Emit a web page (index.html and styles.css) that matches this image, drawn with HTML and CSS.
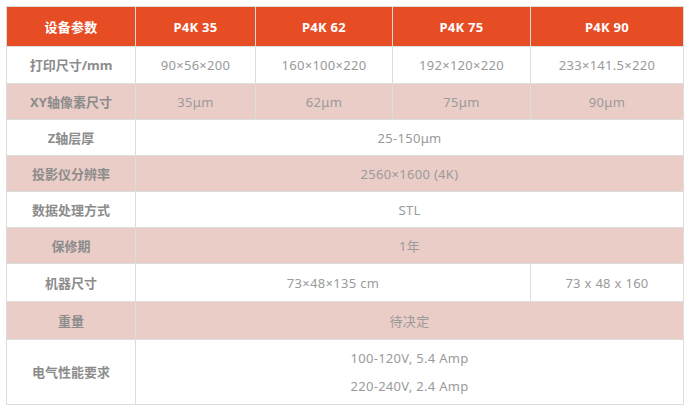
FILE: index.html
```html
<!DOCTYPE html>
<html lang="zh-CN">
<head>
<meta charset="utf-8">
<title>设备参数</title>
<link rel="stylesheet" href="styles.css">
</head>
<body>
<table class="spec">
  <colgroup>
    <col class="c1"><col class="c2"><col class="c3"><col class="c4"><col class="c5">
  </colgroup>
  <thead>
    <tr class="head">
      <th>设备参数</th><th>P4K 35</th><th>P4K 62</th><th>P4K 75</th><th>P4K 90</th>
    </tr>
  </thead>
  <tbody>
    <tr class="r37">
      <th>打印尺寸/mm</th><td>90×56×200</td><td>160×100×220</td><td>192×120×220</td><td>233×141.5×220</td>
    </tr>
    <tr class="alt">
      <th>XY轴像素尺寸</th><td>35μm</td><td>62μm</td><td>75μm</td><td>90μm</td>
    </tr>
    <tr>
      <th>Z轴层厚</th><td colspan="4">25-150μm</td>
    </tr>
    <tr class="alt">
      <th>投影仪分辨率</th><td colspan="4">2560×1600 (4K)</td>
    </tr>
    <tr>
      <th>数据处理方式</th><td colspan="4">STL</td>
    </tr>
    <tr class="alt">
      <th>保修期</th><td colspan="4">1年</td>
    </tr>
    <tr class="r38">
      <th>机器尺寸</th><td colspan="3">73×48×135 cm</td><td>73 x 48 x 160</td>
    </tr>
    <tr class="alt r38">
      <th>重量</th><td colspan="4">待决定</td>
    </tr>
    <tr class="tall">
      <th>电气性能要求</th><td colspan="4"><p class="line">100-120V, 5.4 Amp</p><p class="line">220-240V, 2.4 Amp</p></td>
    </tr>
  </tbody>
</table>
</body>
</html>
```

FILE: styles.css
```css
html, body {
  margin: 0;
  padding: 0;
  background: #ffffff;
}
body {
  padding: 6px;
  font-family: "Noto Sans", "Noto Sans CJK SC", sans-serif;
  font-size: 13px;
  color: #9a9a9a;
}
.spec {
  border-collapse: collapse;
  table-layout: fixed;
  width: 677px;
}
.c1 { width: 129px; }
.c2 { width: 120px; }
.c3 { width: 137px; }
.c4 { width: 138px; }
.c5 { width: 153px; }
.spec th,
.spec td {
  border: 1px solid #dddddd;
  text-align: center;
  vertical-align: middle;
  padding: 0;
  height: 35px;
  line-height: 18px;
}
.spec td {
  letter-spacing: 0.3px;
}
.spec tbody th {
  font-weight: bold;
  color: #8c8c8c;
}
.head th {
  background: #e64d25;
  color: #ffffff;
  font-weight: bold;
  height: 39px;
  letter-spacing: 0.3px;
}
.r37 th,
.r37 td {
  height: 36px;
}
.r38 th,
.r38 td {
  height: 37px;
}
.alt th,
.alt td {
  background: #eacdc7;
}
.tall th,
.tall td {
  height: 64px;
}
.line {
  margin: 0;
  line-height: 28px;
}
```
